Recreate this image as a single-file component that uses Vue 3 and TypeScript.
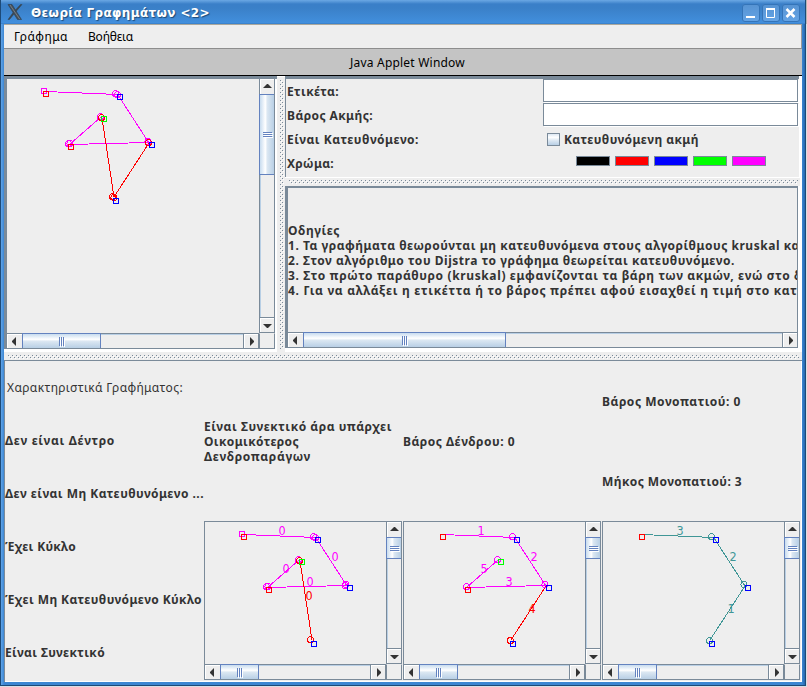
<script setup lang="ts">
import { h, type FunctionalComponent } from 'vue'

// Spreads a label over the given width through its letter spacing.
const vFit = {
  mounted(el: HTMLElement, binding: { value: number }) {
    const count = (el.textContent ?? '').length
    const natural = el.getBoundingClientRect().width
    el.style.letterSpacing = `${(binding.value - natural) / count}px`
  },
}

const ScrollBar: FunctionalComponent<{ dir: 'h' | 'v'; thumb: number }> = (props) => {
  const arrows = props.dir === 'h'
    ? ['M9 3 L5 7 V8 L9 12 Z', 'M6 3 L10 7 V8 L6 12 Z']
    : ['M3 9 L7 5 H8 L12 9 Z', 'M3 6 L7 10 H8 L12 6 Z']
  const size = props.dir === 'h' ? { width: `${props.thumb}px` } : { height: `${props.thumb}px` }
  const arrow = (d: string) => h('svg', { width: 14, height: 14, viewBox: '0 0 14 14' }, [h('path', { d, fill: '#333' })])
  return h('div', { class: ['bar', props.dir] }, [
    h('div', { class: 'step' }, [arrow(arrows[0])]),
    h('div', { class: 'thumb', style: size }, [h('i'), h('i'), h('i')]),
    h('div', { class: 'track' }),
    h('div', { class: 'step last' }, [arrow(arrows[1])]),
  ])
}

// Raised bumps of a split pane divider: a dark dot with a light one below it.
const Bumps: FunctionalComponent<{ name: string }> = ({ name }) =>
  h('svg', { class: 'bumps' }, [
    h('pattern', { id: name, width: 4, height: 4, patternUnits: 'userSpaceOnUse' }, [
      h('path', { d: 'M0 0h1v1h-1zM2 2h1v1h-1z', fill: '#7a8a99' }),
      h('path', { d: 'M1 1h1v1h-1zM3 3h1v1h-1z', fill: '#fff' }),
    ]),
    h('rect', { width: '100%', height: '100%', fill: `url(#${name})` }),
  ])
Bumps.props = ['name']

const M = '#ff00ff'
const R = '#ff0000'
const B = '#0000ff'
const G = '#00ff00'
const T = '#3f9696'

type Line = [number, number, number, number, string]
type Ring = [number, number, string]
type Box = [number, number, string]
type Tag = [number, number, string, string]
interface Graph { lines: Line[]; rings: Ring[]; boxes: Box[]; tags: Tag[] }

const top = (c: string): Line => [38, 12.5, 111, 15.5, c]
const side = (c: string): Line => [111, 16, 142, 64, c]
const base = (c: string): Line => [62, 65.5, 142, 63.5, c]
const rise = (c: string): Line => [63, 65, 94, 38, c]
const drop = (c: string): Line => [95, 39, 107, 118, c]
const lower = (c: string): Line => [142, 64, 107, 118, c]

const allBoxes: Box[] = [[36, 12, R], [110, 15, B], [94, 37, G], [61, 65, R], [142, 63, B], [106, 119, B]]
const doubled: Ring[] = [
  [108.5, 14.5, M], [110.5, 15.5, M], [93.5, 37.5, M], [94.5, 38.5, R],
  [61.5, 64.5, M], [63, 64.5, M], [141, 62.5, M],
]

const mainGraph: Graph = {
  lines: [top(M), side(M), base(M), rise(M), drop(R), lower(R)],
  rings: [...doubled, [141.5, 63.5, R], [105.5, 117.5, R], [107, 118.5, R]],
  boxes: [[34, 9, M], ...allBoxes],
  tags: [],
}
const resultGraphs: Graph[] = [
  {
    lines: [top(M), side(M), base(M), rise(M), drop(R)],
    rings: [...doubled, [140, 63.5, M], [105.5, 117.5, R]],
    boxes: [[34, 9, M], ...allBoxes],
    tags: [[77, 13, '0', M], [130, 39, '0', M], [81, 51, '0', M], [105, 64, '0', M], [104, 78, '0', R]],
  },
  {
    lines: [top(M), side(M), base(M), rise(M), lower(R)],
    rings: [[108.5, 14.5, M], [141, 62.5, M], [62.5, 64.5, M], [93.5, 37.5, M], [106.5, 118.5, R]],
    boxes: allBoxes,
    tags: [[77, 13, '1', M], [130, 39, '2', M], [80, 51, '5', M], [105, 64, '3', M], [128, 91, '4', R]],
  },
  {
    lines: [top(T), side(T), lower(T)],
    rings: [[108.5, 14.5, T], [141, 62.5, T], [106.5, 118.5, T]],
    boxes: [[36, 12, R], [110, 15, B], [142, 63, B], [106, 119, B]],
    tags: [[77, 13, '3', T], [130, 39, '2', T], [128, 91, '1', T]],
  },
]

const GraphView: FunctionalComponent<{ graph: Graph }> = ({ graph }) =>
  h('svg', { class: 'graph' }, [
    ...graph.lines.map(([x1, y1, x2, y2, c]) => h('line', { x1, y1, x2, y2, stroke: c })),
    ...graph.rings.map(([cx, cy, c]) => h('circle', { cx, cy, r: 3, stroke: c })),
    ...graph.boxes.map(([x, y, c]) => h('rect', { x: x + 0.5, y: y + 0.5, width: 5, height: 5, stroke: c })),
    ...graph.tags.map(([x, y, t, c]) => h('text', { x, y, fill: c }, t)),
  ])
GraphView.props = ['graph']
ScrollBar.props = ['dir', 'thumb']

const swatches = ['black', 'red', 'blue', 'lime', 'magenta']
const guide: [string, number][] = [
  ['Οδηγίες', 52],
  ['1. Τα γραφήματα θεωρούνται μη κατευθυνόμενα στους αλγορίθμους kruskal κα', 512],
  ['2. Στον αλγόριθμο του Dijstra το γράφημα θεωρείται κατευθυνόμενο.', 447],
  ['3. Στο πρώτο παράθυρο (kruskal) εμφανίζονται τα βάρη των ακμών, ενώ στο δ', 514],
  ['4. Για να αλλάξει η ετικέττα ή το βάρος πρέπει αφού εισαχθεί η τιμή στο κατε', 516],
]
const traits: [string, number][] = [
  ['Δεν είναι Δέντρο', 110],
  ['Δεν είναι Μη Κατευθυνόμενο ...', 199],
  ['Έχει Κύκλο', 71],
  ['Έχει Μη Κατευθυνόμενο Κύκλο', 197],
  ['Είναι Συνεκτικό', 100],
]
</script>

<template>
  <div class="desktop">
    <div class="window">
      <header class="title">
        <svg class="logo" width="18" height="18" viewBox="0 0 18 18">
          <path d="M2 1.5H6L15.5 16.5H11.5Z" fill="#454f59" stroke="#2c3e50" stroke-width=".6" />
          <path d="M14.5 1.5H16L10 8.5L9 7.5ZM2 16.5H3.5L8 11L7.2 9.5Z" fill="#3b4650" stroke="#354656" stroke-width=".6" />
          <path d="M4 2L13.8 16.2" stroke="#89939b" stroke-width=".7" />
        </svg>
        <span class="name"><span v-fit="179">Θεωρία Γραφημάτων &lt;2&gt;</span></span>
        <div class="controls">
          <svg viewBox="0 0 18 18"><path d="M4 13H13" stroke="#fff" stroke-width="2" /></svg>
          <svg viewBox="0 0 18 18"><path d="M4.5 4V13.5H12.5V4" fill="none" stroke="#fff" /><path d="M4 5H13" stroke="#fff" stroke-width="2" /></svg>
          <svg viewBox="0 0 18 18"><path d="M4.5 5L12.5 13M12.5 5L4.5 13" stroke="#fff" stroke-width="2.5" /></svg>
        </div>
      </header>
      <div class="client">
        <nav class="menu">
          <span class="m1"><span v-fit="54">Γράφημα</span></span>
          <span><span v-fit="45">Βοήθεια</span></span>
        </nav>
        <div class="applet"><span v-fit="115">Java Applet Window</span></div>

        <main class="upper">
          <section class="left-pane">
            <div class="scroll-grid">
              <GraphView :graph="mainGraph" />
              <ScrollBar dir="v" :thumb="81" />
              <ScrollBar dir="h" :thumb="79" />
              <div class="corner"></div>
            </div>
          </section>
          <div class="split vertical"><Bumps name="bumps-a" /></div>
          <div class="right">
            <section class="form">
              <div class="cell"><b v-fit="52">Ετικέτα:</b></div>
              <input class="field" />
              <div class="cell"><b v-fit="86">Βάρος Ακμής:</b></div>
              <input class="field" />
              <div class="cell"><b v-fit="132">Είναι Κατευθνόμενο:</b></div>
              <label class="check"><span class="tick"></span><b v-fit="135">Κατευθυνόμενη ακμή</b></label>
              <div class="cell"><b v-fit="47">Χρώμα:</b></div>
              <div class="swatches"><span v-for="c in swatches" :key="c" :class="c"></span></div>
            </section>
            <div class="split horizontal inner"><Bumps name="bumps-b" /></div>
            <section class="guide">
              <div class="guide-text">
                <div v-for="[text, width] in guide" :key="text"><b v-fit="width">{{ text }}</b></div>
              </div>
              <ScrollBar dir="h" :thumb="203" />
            </section>
          </div>
        </main>

        <div class="split horizontal"><Bumps name="bumps-c" /></div>

        <section class="lower">
          <div class="traits">
            <div class="heading"><span v-fit="176">Χαρακτηριστικά Γραφήματος:</span></div>
            <div v-for="[text, width] in traits" :key="text"><b v-fit="width">{{ text }}</b></div>
          </div>
          <div class="column">
            <div class="note">
              <div><b v-fit="188">Είναι Συνεκτικό άρα υπάρχει</b></div>
              <div><b v-fit="95">Οικομικότερος</b></div>
              <div><b v-fit="107">Δενδροπαράγων</b></div>
            </div>
            <div class="result"><GraphView :graph="resultGraphs[0]" /><ScrollBar dir="v" :thumb="22" /><ScrollBar dir="h" :thumb="39" /><div class="corner"></div></div>
          </div>
          <div class="column">
            <div class="note"><div><b v-fit="112">Βάρος Δένδρου: 0</b></div></div>
            <div class="result"><GraphView :graph="resultGraphs[1]" /><ScrollBar dir="v" :thumb="22" /><ScrollBar dir="h" :thumb="39" /><div class="corner"></div></div>
          </div>
          <div class="column">
            <div class="note halves">
              <div><b v-fit="139">Βάρος Μονοπατιού: 0</b></div>
              <div><b v-fit="140">Μήκος Μονοπατιού: 3</b></div>
            </div>
            <div class="result"><GraphView :graph="resultGraphs[2]" /><ScrollBar dir="v" :thumb="22" /><ScrollBar dir="h" :thumb="39" /><div class="corner"></div></div>
          </div>
        </section>
      </div>
    </div>
  </div>
</template>

<style>
body { overflow: hidden; }
.bar { display: flex; box-sizing: border-box; background: #eee; }
.bar svg { display: block; flex: none; }
.bar.v { flex-direction: column; width: 16px; border-left: 1px solid #7a8a99; border-right: 1px solid #7a8a99; }
.bar.h { height: 16px; border-top: 1px solid #7a8a99; border-bottom: 1px solid #7a8a99; }
.bar .step { box-sizing: border-box; flex: none; overflow: hidden; box-shadow: inset 1px 1px #fff; }
.bar.v .step { height: 15px; width: 14px; }
.bar.h .step { width: 15px; height: 14px; }
.bar.v .step.last { height: 16px; border-top: 1px solid #7a8a99; border-bottom: 1px solid #7a8a99; }
.bar.h .step.last { width: 16px; border-left: 1px solid #7a8a99; border-right: 1px solid #7a8a99; }
.bar .track { flex: 1; }
.bar.v .track { box-shadow: inset 1px 0 #b8cfe5; }
.bar.h .track { box-shadow: inset 0 1px #b8cfe5; }
.bar .thumb { box-sizing: border-box; flex: none; display: flex; align-items: center; justify-content: center; gap: 1px; border: 1px solid #6382bf; }
.bar.v .thumb { flex-direction: column; margin-left: -1px; width: 15px; border-right: 0; background: linear-gradient(90deg, #c8dcef, #fff 38%, #dbe7f2 52%, #b8cfe5); }
.bar.h .thumb { margin-top: -1px; height: 15px; border-bottom: 0; background: linear-gradient(#c8dcef, #fff 38%, #dbe7f2 52%, #b8cfe5); }
.bar .thumb i { display: block; background: #6382bf; }
.bar.h .thumb i { width: 1px; height: 9px; box-shadow: 1px 1px #fff; }
.bar.v .thumb i { height: 1px; width: 9px; box-shadow: 1px 1px #fff; }
.bumps { display: block; width: 100%; height: 100%; shape-rendering: crispEdges; }
.graph { display: block; width: 100%; height: 100%; fill: none; shape-rendering: crispEdges; }
.graph text { font: 12.5px "DejaVu Sans Condensed", "DejaVu Sans", sans-serif; text-anchor: middle; stroke: none; }
</style>

<style scoped>
.desktop { width: 807px; height: 687px; background: linear-gradient(#b5b5b5 24px, #d8dfe6 24px); font: 12px/15px "Noto Sans", sans-serif; color: #333; white-space: nowrap; }
.window { box-sizing: border-box; width: 806px; height: 686px; display: flex; flex-direction: column; border: 1px solid #1d4a78; border-top: 0; background: linear-gradient(90deg, #60a4e8 0, #3c86d2 3px, #3c86d2 801px, #2468ae); }
.title { height: 24px; flex: none; display: flex; align-items: center; padding: 0 5px 0 5px; background: linear-gradient(#6ba8e4 0, #3a7fc8 4px, #3a80c8 8px, #428fdd 23px, #3476bd); }
.logo { flex: none; margin-right: 7px; }
.name { flex: 1; color: #fff; font: bold 12px/16px "DejaVu Sans", sans-serif; text-shadow: 1px 1px 1px #1d4a78; padding-top: 2px; }
.controls { display: flex; gap: 2px; padding-top: 1px; }
.controls svg { box-sizing: border-box; width: 18px; height: 18px; border-radius: 3px; background: linear-gradient(#5793d2, #64a4e6); box-shadow: inset 0 0 0 1px #3474b8; }
.client { flex: none; width: 798px; height: 658px; margin-left: 3px; background: #eee; display: flex; flex-direction: column; }
.menu { box-sizing: border-box; height: 25px; flex: none; display: flex; align-items: center; border-top: 1px solid #aaa79c; border-bottom: 1px solid #8d8d8d; border-right: 1px solid #999; padding: 0 0 0 10px; color: #000; }
.m1 { width: 74px; }
.applet { box-sizing: border-box; height: 27px; flex: none; background: #c4c4c4; border-bottom: 1px solid #000; color: #000; text-align: center; line-height: 27px; padding-left: 9px; }
.upper { height: 276px; flex: none; display: flex; background: #fff; }
.left-pane { box-sizing: border-box; width: 273px; border: solid #7a8a99; border-width: 3px 0 0 3px; height: 273px; background: #fff; }
.scroll-grid { display: grid; grid-template: 254px 16px / 252px 16px; width: 268px; background: #eee; }
.corner { border: solid #7a8a99; border-width: 0 1px 1px; border-top: 1px solid #eee; }
.split { background: #eee; box-sizing: border-box; flex: none; }
.split.vertical { width: 8px; height: 275px; margin-top: 1px; padding: 3px 1px 3px 3px; }
.split.horizontal { height: 8px; padding: 3px 3px 1px 4px; }
.split.horizontal.inner { height: 9px; border-top: 1px solid #fff; margin-right: 2px; padding: 2px 2px 2px 4px; }
.right { flex: 1; display: flex; flex-direction: column; }
.form { box-sizing: border-box; height: 101px; border: solid #7a8a99; border-width: 3px 0 0 1px; background: #eee; display: grid; grid-template: repeat(4, 24px) / 257px 256px; margin-right: 3px; }
.cell { padding: 5px 0 0 1px; }
.field { box-sizing: border-box; width: 255px; height: 23px; margin: 0; padding: 0; border: 1px solid #7a8a99; border-radius: 0; background: #fff; box-shadow: 1px 1px #fff; }
.check { display: flex; gap: 4px; padding: 5px 0 0 4px; }
.check b { line-height: 15px; }
.tick { box-sizing: border-box; width: 13px; height: 13px; border: 1px solid #7a8a99; margin-top: 1px; background: linear-gradient(#dde8f3, #fff 30%, #dbe7f2 60%, #b8cfe5); }
.swatches { display: flex; gap: 5px; padding: 5px 0 0 33px; }
.swatches span { box-sizing: border-box; width: 34px; height: 10px; border: 1px solid #7a8a99; }
.black { background: #000; } .red { background: #f00; } .blue { background: #00f; } .lime { background: #0f0; } .magenta { background: #f0f; }
.guide { box-sizing: border-box; width: 513px; height: 162px; border: solid #7a8a99; border-width: 2px 0 0 3px; background: #eee; }
.guide-text { box-sizing: border-box; width: 510px; height: 144px; border-right: 1px solid #7a8a99; overflow: hidden; padding-top: 35px; }
.lower { box-sizing: border-box; height: 322px; flex: none; display: flex; border: solid #7a8a99; border-width: 1px 0 0 1px; box-shadow: inset -1px -1px #fff; }
.traits { width: 199px; display: grid; grid-template-rows: repeat(6, 53px); align-items: center; align-content: start; }
.traits .heading { padding-left: 2px; }
.column { width: 199px; }
.note { height: 160px; display: flex; flex-direction: column; justify-content: center; }
.halves { justify-content: space-around; }
.result { box-sizing: border-box; width: 198px; height: 159px; display: grid; grid-template: 142px 16px / 181px 16px; border: solid #7a8a99; border-width: 1px 0 0 1px; }
</style>
